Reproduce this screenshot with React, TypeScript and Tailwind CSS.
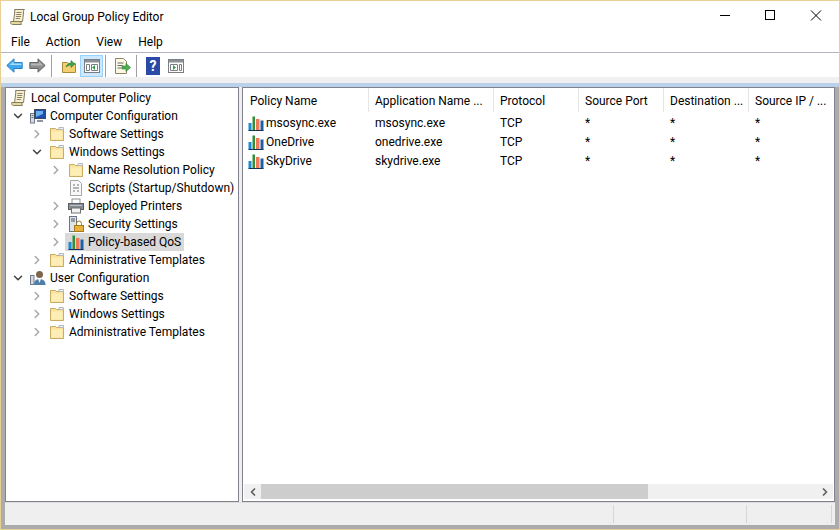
import { ChevronDown, ChevronRight, ChevronLeft } from "lucide-react";

const font = { fontFamily: "Roboto, sans-serif" };

function ScrollIcon({ className = "" }: { className?: string }) {
  return (
    <svg viewBox="0 0 16 16" className={className}>
      <path d="M4.5.5h10c-1.2 1-1.2 2-1 3.5l-1 8.5H3.5L4.7 4C4.9 2.5 4.8 1.5 4.5.5Z" fill="#f6eecf" stroke="#857c60" />
      <path d="M.7 12.5h10.5c-.4 1-.4 2 .1 3H2.5c-1.5 0-2.2-1.5-1.8-3Z" fill="#e6d79f" stroke="#857c60" />
      <path d="M6.5 3.5h5M6.2 5.5h5M6 7.5h5M5.8 9.5h4" stroke="#8a836c" />
    </svg>
  );
}

function FolderIcon() {
  return (
    <svg viewBox="0 0 16 16" className="h-4 w-4 shrink-0">
      <path d="M1.5 2.5h5l1 1h7v11h-13Z" fill="#fbe29a" stroke="#c9ab62" />
      <path d="M2.5 5.5h11v8h-11Z" fill="#fdeeb8" />
      <path d="M10 1.5h4.5v2H10Z" fill="#eef3f8" stroke="#b5b9bd" />
    </svg>
  );
}

function BarsIcon({ className = "h-4 w-4" }: { className?: string }) {
  return (
    <svg viewBox="0 0 16 16" className={`${className} shrink-0`}>
      <rect x="0.5" y="8" width="3" height="7.5" fill="#1e8ad6" />
      <rect x="4.5" y="1.5" width="2.5" height="14" fill="#2f8f3a" />
      <rect x="8" y="4" width="3.5" height="11.5" fill="#f0795a" />
      <rect x="12.5" y="5.5" width="3" height="10" fill="#1f5fa8" />
      <path d="M.5 15.5h15" stroke="#12335a" />
    </svg>
  );
}

function ComputerIcon() {
  return (
    <svg viewBox="0 0 16 16" className="h-4 w-4 shrink-0">
      <rect x="0.5" y="5.5" width="4" height="9.5" fill="#d5dbe2" stroke="#6f7a86" />
      <path d="M1.5 7.5h2M1.5 9.5h2" stroke="#6f7a86" />
      <rect x="4.5" y="1.5" width="11" height="9" fill="#1d4fb0" stroke="#3d4a5c" />
      <path d="M6 3h7v3l-7 3Z" fill="#6db0ee" />
      <path d="M7 12h6v2H7Z" fill="#8b96a3" />
    </svg>
  );
}

function UserIcon() {
  return (
    <svg viewBox="0 0 16 16" className="h-4 w-4 shrink-0">
      <rect x="0.5" y="5.5" width="3.5" height="9" fill="#d5dbe2" stroke="#6f7a86" />
      <circle cx="9.5" cy="4.5" r="3.5" fill="#7d644e" />
      <path d="M4 15c0-4 2-6 5.5-6S15.5 11 15.5 15Z" fill="#4f7fa8" />
      <path d="M8 9h3l-1.5 4Z" fill="#e8eef4" />
    </svg>
  );
}

function ScriptIcon() {
  return (
    <svg viewBox="0 0 16 16" className="h-4 w-4 shrink-0">
      <path d="M2.5.5h8l3 3v12h-11Z" fill="#f8f8f8" stroke="#a5a5a5" />
      <path d="M5 5h2M9 5h2M5 8h6M5 11h2M9 11h2" stroke="#707070" />
    </svg>
  );
}

function PrinterIcon() {
  return (
    <svg viewBox="0 0 16 16" className="h-4 w-4 shrink-0">
      <rect x="4" y="1" width="8" height="5" fill="#fff" stroke="#909090" />
      <rect x="0.5" y="5.5" width="15" height="6" fill="#868c93" stroke="#5a5f65" />
      <path d="M2 7.5h12" stroke="#b9bec4" />
      <rect x="3.5" y="10" width="9" height="5" fill="#f4f4f4" stroke="#707070" />
    </svg>
  );
}

function SecurityIcon() {
  return (
    <svg viewBox="0 0 16 16" className="h-4 w-4 shrink-0">
      <rect x="1.5" y="0.5" width="7" height="15" fill="#dfe4ea" stroke="#6b7480" />
      <path d="M3 3h4M3 5h4" stroke="#4a5562" />
      <rect x="6.5" y="9.5" width="9" height="6" fill="#e8b13c" stroke="#a37a1c" />
      <path d="M8.5 9.5V7.5a2.5 2.5 0 0 1 5 0v2" fill="none" stroke="#a37a1c" />
    </svg>
  );
}

function ArrowIcon({ dir }: { dir: "left" | "right" }) {
  return dir === "left" ? (
    <svg viewBox="0 0 17 15" className="h-[15px] w-[17px]">
      <path d="M.8 7.5 8 .8v3.7h8.2v6H8v3.7Z" fill="#3fa9f0" stroke="#2a80c4" />
      <path d="M3 7.5 7.5 3.5v2h8v1.5H4Z" fill="#a6dcfb" />
    </svg>
  ) : (
    <svg viewBox="0 0 17 15" className="h-[15px] w-[17px]">
      <path d="M16.2 7.5 9 .8v3.7H.8v6H9v3.7Z" fill="#8c8c8c" stroke="#666" />
      <path d="M2 5.5h8v-2l4 4H2Z" fill="#b5b5b5" />
    </svg>
  );
}

function PaneIcon({ mark }: { mark: "left" | "right" }) {
  return (
    <svg viewBox="0 0 16 14" className="h-[14px] w-4">
      <rect x="0.5" y="0.5" width="15" height="13" fill="#fff" stroke="#7a7f85" />
      <rect x="1" y="1" width="14" height="2.5" fill="#8b9197" />
      {mark === "left" ? (
        <>
          <path d="M2.5 5.5h3v6h-3Z" fill="none" stroke="#7a7f85" />
          <path d="M7.5 5.5h6v6h-6Z" fill="none" stroke="#7a7f85" />
          <path d="M11 6v5L8 8.5Z" fill="#2e9e4a" />
        </>
      ) : (
        <>
          <path d="M2.5 5.5h7v6h-7Z" fill="none" stroke="#7a7f85" />
          <path d="M11.5 5.5h2v6h-2Z" fill="none" stroke="#7a7f85" />
          <path d="M5 6v5l3-2.5Z" fill="#2e9e4a" />
        </>
      )}
    </svg>
  );
}

function Sep() {
  return <div className="h-[22px] w-px bg-[#a0a0a0]" />;
}

type Node = {
  label: string;
  depth: number;
  open?: boolean;
  leaf?: boolean;
  selected?: boolean;
  icon: React.ReactNode;
};

const folder = <FolderIcon />;

const tree: Node[] = [
  { label: "Local Computer Policy", depth: 0, leaf: true, icon: <ScrollIcon className="h-4 w-4 shrink-0" /> },
  { label: "Computer Configuration", depth: 1, open: true, icon: <ComputerIcon /> },
  { label: "Software Settings", depth: 2, icon: folder },
  { label: "Windows Settings", depth: 2, open: true, icon: folder },
  { label: "Name Resolution Policy", depth: 3, icon: folder },
  { label: "Scripts (Startup/Shutdown)", depth: 3, leaf: true, icon: <ScriptIcon /> },
  { label: "Deployed Printers", depth: 3, icon: <PrinterIcon /> },
  { label: "Security Settings", depth: 3, icon: <SecurityIcon /> },
  { label: "Policy-based QoS", depth: 3, selected: true, icon: <BarsIcon /> },
  { label: "Administrative Templates", depth: 2, icon: folder },
  { label: "User Configuration", depth: 1, open: true, icon: <UserIcon /> },
  { label: "Software Settings", depth: 2, icon: folder },
  { label: "Windows Settings", depth: 2, icon: folder },
  { label: "Administrative Templates", depth: 2, icon: folder },
];

const indent = ["pl-[2px]", "pl-[2px]", "pl-[21px]", "pl-[40px]"];

const columns = [
  { label: "Policy Name", width: "w-[126px]", pad: "pl-[7px]" },
  { label: "Application Name ...", width: "w-[125px]", pad: "pl-[6px]" },
  { label: "Protocol", width: "w-[85px]", pad: "pl-[6px]" },
  { label: "Source Port", width: "w-[85px]", pad: "pl-[6px]" },
  { label: "Destination ...", width: "w-[85px]", pad: "pl-[6px]" },
  { label: "Source IP / ...", width: "w-[85px]", pad: "pl-[6px]" },
];

const rows = [
  ["msosync.exe", "msosync.exe"],
  ["OneDrive", "onedrive.exe"],
  ["SkyDrive", "skydrive.exe"],
];

export default function App() {
  return (
    <div
      style={font}
      className="flex h-[530px] w-[840px] flex-col border border-[#e8cf95] bg-white text-[12px] leading-none text-black"
    >
      <div className="flex h-[31px] items-center pl-[9px]">
        <ScrollIcon className="h-4 w-4" />
        <span className="ml-[4px] flex-1">Local Group Policy Editor</span>
        <svg viewBox="0 0 120 12" className="mb-[3px] mr-[8px] h-3 w-[120px]">
          <path d="M9 6.5h10" stroke="#000" />
          <rect x="54.5" y="1.5" width="9" height="9" fill="none" stroke="#000" />
          <path d="M100 1.5l10 10M110 1.5l-10 10" stroke="#000" />
        </svg>
      </div>

      <div className="flex h-[21px] items-center gap-[16px] border-b border-[#b4b4c0] pl-[10px]">
        <span>File</span>
        <span>Action</span>
        <span>View</span>
        <span>Help</span>
      </div>

      <div className="flex h-[24px] items-center pl-[5px] pt-[1px]">
        <ArrowIcon dir="left" />
        <div className="ml-[6px]">
          <ArrowIcon dir="right" />
        </div>
        <div className="ml-[5px]">
          <Sep />
        </div>
        <svg viewBox="0 0 16 16" className="ml-[9px] h-4 w-4">
          <path d="M1.5 4.5h5l1 1h7v9h-13Z" fill="#f4cf72" stroke="#a98b3e" />
          <path d="M5 9c1-3 3-4 5-4V2.5L14 6l-4 3.5V7C8 7 6.5 8 5 9Z" fill="#3aa84a" stroke="#27803a" strokeWidth="0.6" />
        </svg>
        <div className="ml-[3px] flex h-[22px] w-[23px] items-center justify-center border border-[#99d1ff] bg-[#cce8ff]">
          <PaneIcon mark="left" />
        </div>
        <div className="ml-[2px]">
          <Sep />
        </div>
        <svg viewBox="0 0 17 16" className="ml-[8px] h-4 w-[17px]">
          <path d="M1.5.5h8l3 3v12h-11Z" fill="#fdf8e4" stroke="#8d8468" />
          <path d="M3.5 5h6M3.5 7.5h5M3.5 10h4" stroke="#6b6b6b" />
          <path d="M8 8h4V5.5l4.5 4-4.5 4V11H8Z" fill="#4caf50" stroke="#2c7a32" strokeWidth="0.6" />
        </svg>
        <div className="ml-[5px]">
          <Sep />
        </div>
        <div className="ml-[9px] flex h-[18px] w-[14px] items-center justify-center bg-[#2a4aa8] text-[14px] font-bold text-white">
          ?
        </div>
        <div className="ml-[8px]">
          <PaneIcon mark="right" />
        </div>
      </div>

      <div className="h-[6px] bg-[#f0f0f0]" />

      <div className="flex flex-1 flex-col border-t-4 border-[#b9d1ea] bg-[#ababab] px-[4px] pb-[4px]">
        <div className="flex flex-1 flex-col bg-[#efefef]">
          <div className="flex flex-1 gap-[3px]">
            <div className="w-[234px] border border-[#82828f] bg-white pt-px">
              {tree.map((n, i) => (
                <div key={i} className={`flex h-[18px] items-center ${indent[n.depth]}`}>
                  {n.depth > 0 && (
                    <div className="flex w-[19px] justify-center">
                      {n.leaf ? null : n.open ? (
                        <ChevronDown size={14} strokeWidth={2.5} className="text-[#404040]" />
                      ) : (
                        <ChevronRight size={14} strokeWidth={2.5} className="text-[#a6a6a6]" />
                      )}
                    </div>
                  )}
                  <div className={`flex h-[18px] items-center gap-[4px] pl-[3px] pr-[3px] ${n.selected ? "bg-[#d9d9d9]" : ""}`}>
                    {n.icon}
                    <span className="whitespace-nowrap">{n.label}</span>
                  </div>
                </div>
              ))}
            </div>

            <div className="flex flex-1 flex-col border border-[#82828f] bg-white px-px pb-[2px]">
              <div className="-mx-px flex h-[24px]">
                {columns.map((c) => (
                  <div
                    key={c.label}
                    className={`${c.width} ${c.pad} flex items-center overflow-hidden whitespace-nowrap border-r border-[#e5e5e5] pt-[2px] last:border-r-0`}
                  >
                    {c.label}
                  </div>
                ))}
              </div>
              <div className="-mx-px flex-1 pt-px">
                {rows.map((r) => (
                  <div key={r[0]} className="flex h-[19px] items-center">
                    <div className="flex w-[126px] items-center gap-[2px] pl-[5px]">
                      <BarsIcon className="h-4 w-4" />
                      <span>{r[0]}</span>
                    </div>
                    <div className="w-[125px] pl-[6px]">{r[1]}</div>
                    <div className="w-[85px] pl-[6px]">TCP</div>
                    <div className="w-[85px] pl-[6px]">*</div>
                    <div className="w-[85px] pl-[6px]">*</div>
                    <div className="w-[85px] pl-[6px]">*</div>
                  </div>
                ))}
              </div>
              <div className="flex h-[15px] items-center bg-[#f0f0f0]">
                <div className="flex w-[17px] justify-center">
                  <ChevronLeft size={12} strokeWidth={3.5} className="text-[#606060]" />
                </div>
                <div className="h-full w-[387px] bg-[#cdcdcd]" />
                <div className="flex-1" />
                <div className="flex w-[17px] justify-center">
                  <ChevronRight size={12} strokeWidth={3.5} className="text-[#606060]" />
                </div>
              </div>
            </div>
          </div>

          <div className="flex h-[23px] border-t border-[#dcdcdc] py-[2px]">
            <div className="w-[609px] border-r border-[#d6d6d6]" />
            <div className="w-[133px] border-r border-[#d6d6d6]" />
            <div className="w-[85px] border-r border-[#d6d6d6]" />
          </div>
        </div>
      </div>
    </div>
  );
}
